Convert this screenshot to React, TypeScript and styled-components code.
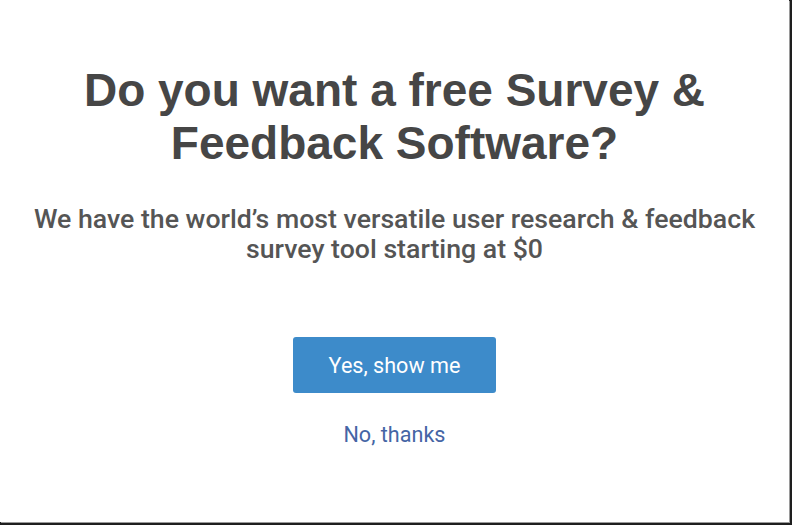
import styled, { createGlobalStyle } from "styled-components";

const GlobalStyle = createGlobalStyle`
  html, body {
    margin: 0;
    padding: 0;
    background: #1e1e1e;
  }
`;

const Frame = styled.div`
  width: 792px;
  height: 525px;
  background: #1e1e1e;
`;

const Panel = styled.div`
  width: 789px;
  height: 522px;
  background: #fff;
  box-shadow: 1px 1px 0 #9a9a9a;
  display: flex;
  flex-direction: column;
  align-items: center;
  box-sizing: border-box;
  padding-top: 64px;
`;

const Title = styled.h1`
  margin: 0;
  font-family: "Liberation Sans", Arial, sans-serif;
  font-weight: 700;
  font-size: 46px;
  line-height: 53px;
  color: #464646;
  text-align: center;
`;

const Subtitle = styled.p`
  margin: 34px 0 0;
  font-family: Roboto, "Noto Sans", sans-serif;
  font-weight: 500;
  font-size: 26.7px;
  line-height: 30px;
  color: #555555;
  text-align: center;
  white-space: nowrap;
`;

const Actions = styled.div`
  margin-top: 73px;
  display: flex;
  flex-direction: column;
  align-items: center;
  gap: 30px;
`;

const PrimaryButton = styled.button`
  width: 203px;
  height: 56px;
  padding: 0;
  border: none;
  border-radius: 3px;
  background: #3d8bca;
  color: #fff;
  font-family: Roboto, "Noto Sans", sans-serif;
  font-size: 21.6px;
  font-weight: 400;
  cursor: pointer;
`;

const TextLink = styled.a`
  font-family: Roboto, "Noto Sans", sans-serif;
  font-size: 21.6px;
  line-height: 24px;
  color: #4565a5;
  text-decoration: none;
  cursor: pointer;
`;

const App = () => {
  return (
    <Frame>
      <GlobalStyle />
      <Panel>
        <Title>
          Do you want a free Survey &amp;
          <br />
          Feedback Software?
        </Title>
        <Subtitle>
          We have the world’s most versatile user research &amp; feedback
          <br />
          survey tool starting at $0
        </Subtitle>
        <Actions>
          <PrimaryButton>Yes, show me</PrimaryButton>
          <TextLink>No, thanks</TextLink>
        </Actions>
      </Panel>
    </Frame>
  );
};

export default App;
